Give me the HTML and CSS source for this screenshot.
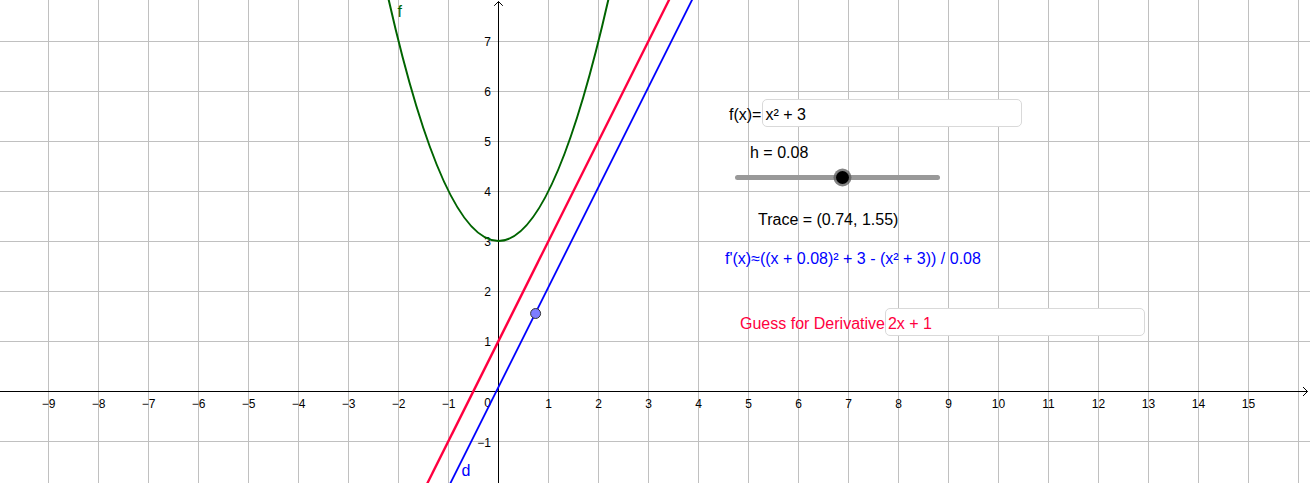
FILE: index.html
```html
<!DOCTYPE html>
<html>
<head>
<meta charset="utf-8">
<link rel="stylesheet" href="styles.css">
</head>
<body>
<div class="applet">
  <svg class="graph" width="1310" height="483" viewBox="0 0 1310 483" xmlns="http://www.w3.org/2000/svg">
    <path class="grid" d="M48.5 0V483M98.5 0V483M148.5 0V483M198.5 0V483M248.5 0V483M298.5 0V483M348.5 0V483M398.5 0V483M448.5 0V483M548.5 0V483M598.5 0V483M648.5 0V483M698.5 0V483M748.5 0V483M798.5 0V483M848.5 0V483M898.5 0V483M948.5 0V483M998.5 0V483M1048.5 0V483M1098.5 0V483M1148.5 0V483M1198.5 0V483M1248.5 0V483M1298.5 0V483M0 41.5H1310M0 91.5H1310M0 141.5H1310M0 191.5H1310M0 241.5H1310M0 291.5H1310M0 341.5H1310M0 441.5H1310"/>
    <path class="axis" d="M0 391.5H1307.5M1303 387L1307.5 391.5L1303 396M498.5 483V1.5M494.2 5.8L498.5 1.5L502.8 5.8"/>
    <g class="xlabels">
      <text x="48.5" y="407.5">−9</text>
      <text x="98.5" y="407.5">−8</text>
      <text x="148.5" y="407.5">−7</text>
      <text x="198.5" y="407.5">−6</text>
      <text x="248.5" y="407.5">−5</text>
      <text x="298.5" y="407.5">−4</text>
      <text x="348.5" y="407.5">−3</text>
      <text x="398.5" y="407.5">−2</text>
      <text x="448.5" y="407.5">−1</text>
      <text x="548.5" y="407.5">1</text>
      <text x="598.5" y="407.5">2</text>
      <text x="648.5" y="407.5">3</text>
      <text x="698.5" y="407.5">4</text>
      <text x="748.5" y="407.5">5</text>
      <text x="798.5" y="407.5">6</text>
      <text x="848.5" y="407.5">7</text>
      <text x="898.5" y="407.5">8</text>
      <text x="948.5" y="407.5">9</text>
      <text x="998.5" y="407.5">10</text>
      <text x="1048.5" y="407.5">11</text>
      <text x="1098.5" y="407.5">12</text>
      <text x="1148.5" y="407.5">13</text>
      <text x="1198.5" y="407.5">14</text>
      <text x="1248.5" y="407.5">15</text>
    </g>
    <g class="ylabels">
      <text x="491" y="46.3">7</text>
      <text x="491" y="96.3">6</text>
      <text x="491" y="146.3">5</text>
      <text x="491" y="196.3">4</text>
      <text x="491" y="246.3">3</text>
      <text x="491" y="296.3">2</text>
      <text x="491" y="346.3">1</text>
      <text x="491" y="407.3">0</text>
      <text x="491" y="446.8">−1</text>
    </g>
    <path class="curve-f" d="M383.5 -23.5Q498.5 505.5 613.5 -23.5"/>
    <path class="line-guess" d="M398.5 541L698.5 -59"/>
    <path class="line-d" d="M398.5 587L698.5 -13"/>
    <circle class="point" cx="535.6" cy="313.5" r="5"/>
    <text class="label-f" x="397.5" y="16.5">f</text>
    <text class="label-d" x="461.5" y="476">d</text>
  </svg>

  <div class="field-row fx-row">
    <span class="field-label">f(x)=</span>
    <div class="input-box">x² + 3</div>
  </div>

  <div class="caption h-caption">h = 0.08</div>
  <div class="slider">
    <div class="slider-knob"></div>
  </div>

  <div class="caption trace-caption">Trace = (0.74, 1.55)</div>
  <div class="caption deriv-caption">f'(x)≈((x + 0.08)² + 3 - (x² + 3)) / 0.08</div>

  <div class="field-row guess-row">
    <span class="field-label">Guess for Derivative</span>
    <div class="input-box">2x + 1</div>
  </div>
</div>
</body>
</html>
```

FILE: styles.css
```css
html, body {
  margin: 0;
  padding: 0;
  background: #ffffff;
}

body {
  font-family: "Liberation Sans", Arial, sans-serif;
  width: 1310px;
  height: 483px;
  overflow: hidden;
}

.applet {
  position: relative;
  width: 1310px;
  height: 483px;
  overflow: hidden;
  background: #ffffff;
}

.graph {
  display: block;
}

.grid {
  stroke: #c0c0c0;
  stroke-width: 1;
  fill: none;
}

.axis {
  stroke: #000000;
  stroke-width: 1;
  fill: none;
}

.xlabels text,
.ylabels text {
  font-family: "Liberation Sans", Arial, sans-serif;
  font-size: 12px;
  fill: #000000;
}

.xlabels text {
  text-anchor: middle;
}

.ylabels text {
  text-anchor: end;
}

.curve-f {
  stroke: #006400;
  stroke-width: 2;
  fill: none;
}

.line-guess {
  stroke: #ff0040;
  stroke-width: 2.4;
  fill: none;
}

.line-d {
  stroke: #0000ff;
  stroke-width: 1.8;
  fill: none;
}

.point {
  fill: #7d7dff;
  stroke: #333333;
  stroke-width: 1;
}

.label-f {
  font-family: "Liberation Sans", Arial, sans-serif;
  font-size: 16px;
  fill: #006400;
}

.label-d {
  font-family: "Liberation Sans", Arial, sans-serif;
  font-size: 16px;
  fill: #0000ff;
}

/* widgets floating on the canvas */
.field-row {
  position: absolute;
  display: flex;
  align-items: baseline;
  font-size: 16px;
  line-height: 20px;
}

.fx-row {
  left: 729px;
  top: 99px;
  gap: 1px;
  color: #000000;
}

.guess-row {
  left: 740px;
  top: 308px;
  color: #ff0040;
}

.field-label {
  white-space: nowrap;
}

.input-box {
  box-sizing: border-box;
  width: 260px;
  height: 28px;
  padding: 5px 2px 1px 2px;
  border: 1px solid #d9d9d9;
  border-radius: 5px;
  background: #ffffff;
  white-space: nowrap;
}

.caption {
  position: absolute;
  font-size: 16px;
  line-height: 20px;
  white-space: nowrap;
  color: #000000;
}

.h-caption {
  left: 750px;
  top: 143px;
}

.trace-caption {
  left: 758px;
  top: 209.5px;
}

.deriv-caption {
  left: 725px;
  top: 249px;
  color: #0000ff;
}

.slider {
  position: absolute;
  left: 735px;
  top: 174.5px;
  width: 205px;
  height: 5px;
  border-radius: 3px;
  background: #999999;
}

.slider-knob {
  position: absolute;
  left: 100.5px;
  top: -4px;
  width: 13px;
  height: 13px;
  border-radius: 50%;
  background: #000000;
  box-shadow: 0 0 0 2.5px rgba(90, 90, 90, 0.75);
}
```
